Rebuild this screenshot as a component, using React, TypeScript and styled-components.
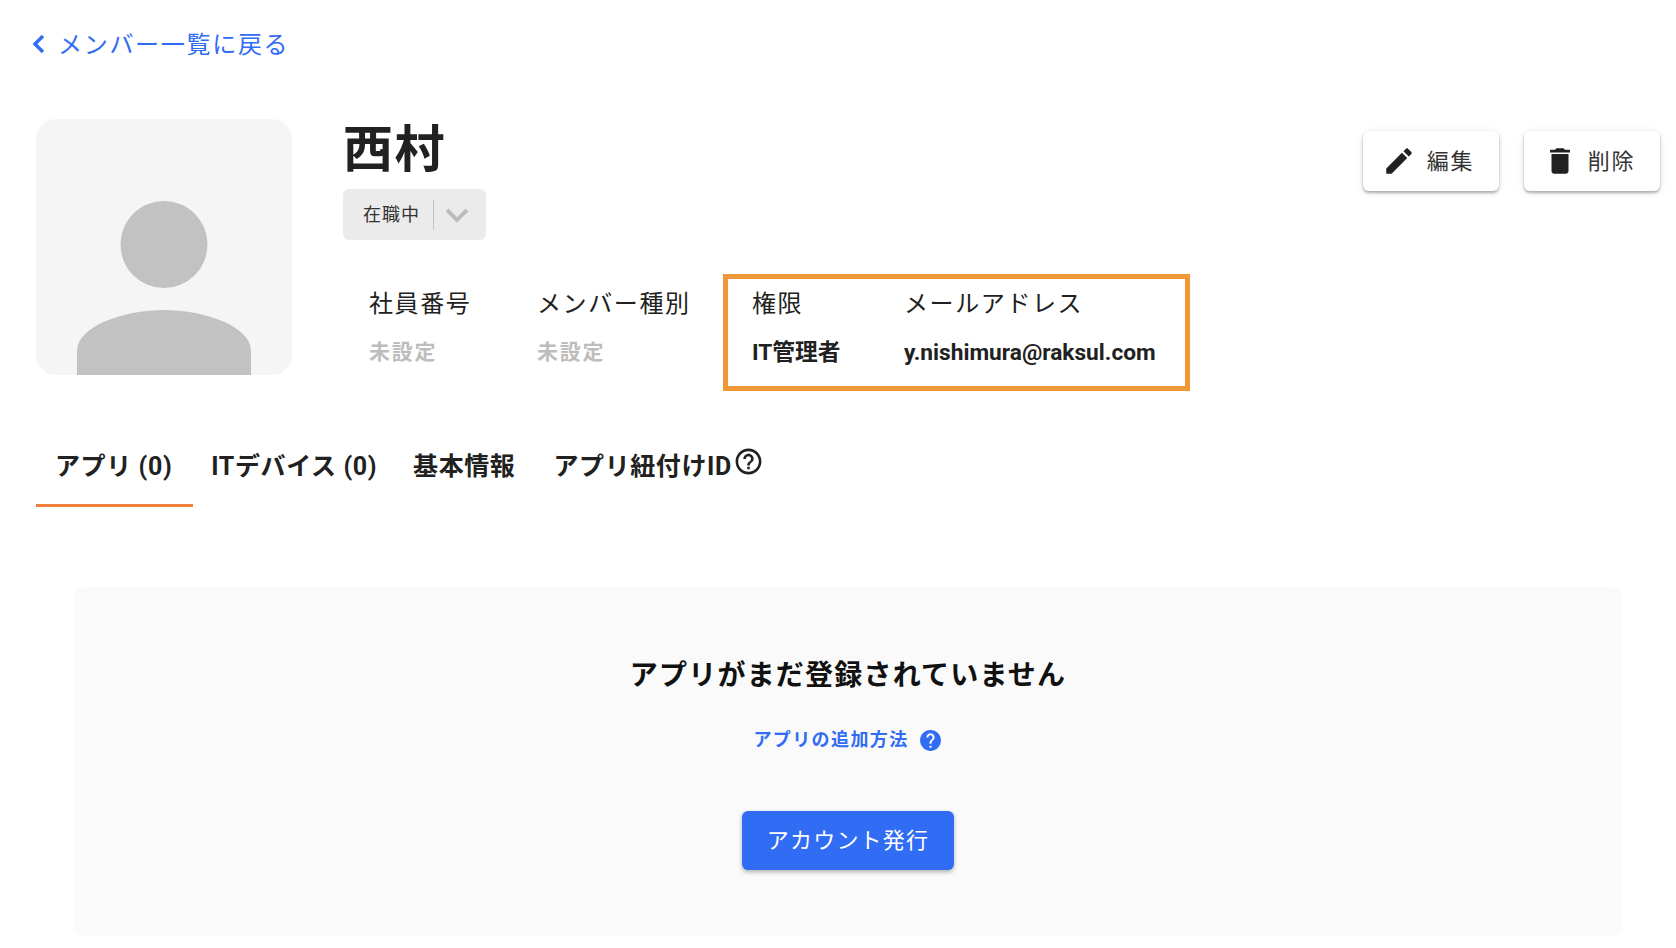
import React from "react";
import styled, { createGlobalStyle } from "styled-components";

const GlobalStyle = createGlobalStyle`
  html, body {
    margin: 0;
    padding: 0;
    background: #fff;
    font-family: Roboto, "Noto Sans CJK JP", sans-serif;
    color: #212121;
  }
`;

const Page = styled.div`
  width: 1676px;
  height: 948px;
  box-sizing: border-box;
  padding: 0 16px 12px 36px;
  display: flex;
  flex-direction: column;
  overflow: hidden;
`;

const BackLink = styled.a`
  display: flex;
  align-items: center;
  height: 88px;
  margin-left: -6px;
  margin-bottom: 31px;
  gap: 12px;
  color: #316cf4;
  font-size: 24px;
  letter-spacing: 1.7px;
  svg {
    width: 16px;
    height: 24px;
  }
`;

const BackLabel = styled.span`
  margin-bottom: 4px;
`;

const Header = styled.div`
  display: flex;
  height: 256px;
`;

const Avatar = styled.div`
  width: 256px;
  height: 256px;
  flex-shrink: 0;
  background: #f5f5f5;
  border-radius: 20px;
  overflow: hidden;
  svg {
    display: block;
  }
`;

const Profile = styled.div`
  margin-left: 51px;
  flex-grow: 1;
`;

const Name = styled.h1`
  margin: 0;
  height: 70px;
  line-height: 62px;
  font-size: 50px;
  font-weight: 700;
  letter-spacing: 1.5px;
`;

const StatusSelect = styled.div`
  width: 143px;
  height: 51px;
  box-sizing: border-box;
  display: flex;
  align-items: center;
  padding: 0 0 0 20px;
  background: #ebebeb;
  border-radius: 6px;
  font-size: 18px;
  letter-spacing: 1px;
  color: #333;
`;

const StatusLabel = styled.span`
  margin-bottom: 4px;
`;

const SelectDivider = styled.span`
  width: 1px;
  height: 30px;
  margin: 0 10px 0 13px;
  background: #c4c4c4;
`;

const MetaRow = styled.div`
  display: flex;
  margin-top: 34px;
`;

const MetaGroup = styled.div`
  display: flex;
  padding-left: 26px;
  padding-top: 14px;
  height: 117px;
  box-sizing: border-box;
`;

const MetaHighlight = styled.div`
  display: flex;
  width: 467px;
  height: 117px;
  box-sizing: border-box;
  margin-left: 36px;
  padding: 9px 0 0 24px;
  border: 5px solid #f09837;
`;

const MetaItem = styled.div<{ $width: number }>`
  width: ${(p) => p.$width}px;
  flex-shrink: 0;
`;

const MetaLabel = styled.div`
  font-size: 24px;
  line-height: 32px;
  letter-spacing: 1.6px;
  white-space: nowrap;
`;

const MetaValue = styled.div<{ $empty?: boolean }>`
  margin-top: ${(p) => (p.$empty ? "16px" : "17px")};
  font-size: ${(p) => (p.$empty ? "21px" : "22.7px")};
  line-height: 32px;
  font-weight: 700;
  letter-spacing: ${(p) => (p.$empty ? "1.7px" : "0")};
  color: ${(p) => (p.$empty ? "#bdbdbd" : "#212121")};
  white-space: nowrap;
`;

const Actions = styled.div`
  display: flex;
  gap: 25px;
  margin-top: 12px;
`;

const ActionButton = styled.button`
  width: 136px;
  height: 60px;
  display: flex;
  align-items: center;
  justify-content: center;
  gap: 11px;
  padding: 0 6px 0 0;
  border: none;
  border-radius: 6px;
  background: #fff;
  font-family: inherit;
  font-size: 22px;
  letter-spacing: 1.7px;
  color: #333;
  box-shadow: 0 2px 3px rgba(0, 0, 0, 0.3), 0 1px 8px rgba(0, 0, 0, 0.08);
  svg {
    width: 34px;
    height: 34px;
    fill: #212121;
  }
`;

const ActionLabel = styled.span`
  margin-bottom: 4px;
`;

const Tabs = styled.div`
  display: flex;
  margin-top: 44px;
  height: 88px;
`;

const Tab = styled.div<{ $active?: boolean; $trim?: number }>`
  display: flex;
  align-items: center;
  height: 88px;
  box-sizing: border-box;
  padding: 4px ${(p) => (p.$active ? 21 : 19)}px 0 19px;
  margin-right: ${(p) => -(p.$trim ?? 0)}px;
  font-size: 25px;
  font-weight: 700;
  letter-spacing: 0.6px;
  white-space: nowrap;
  border-bottom: 3px solid ${(p) => (p.$active ? "#ee7f3a" : "transparent")};
  svg {
    width: 31px;
    height: 31px;
    margin: -4px 0 0 1px;
    fill: #212121;
  }
`;

const EmptyPanel = styled.section`
  margin: 80px 38px 0;
  height: 349px;
  background: #fafafa;
  border-radius: 8px;
  display: flex;
  flex-direction: column;
  align-items: center;
`;

const EmptyTitle = styled.h2`
  margin: 70px 0 0;
  font-size: 28px;
  line-height: 38px;
  font-weight: 700;
  letter-spacing: 1.2px;
  color: #111;
`;

const HelpLink = styled.a`
  display: flex;
  align-items: center;
  gap: 9px;
  margin-top: 31px;
  font-size: 18px;
  line-height: 28px;
  font-weight: 700;
  letter-spacing: 1.4px;
  color: #316cf4;
  svg {
    width: 25px;
    height: 25px;
    fill: #316cf4;
  }
`;

const IssueButton = styled.button`
  width: 212px;
  height: 59px;
  margin-top: 57px;
  padding: 0 0 6px;
  border: none;
  border-radius: 6px;
  background: #316cf4;
  color: #fff;
  font-family: inherit;
  font-size: 22px;
  letter-spacing: 1.2px;
  box-shadow: 0 2px 4px rgba(0, 0, 0, 0.3);
`;

const Chevron = styled.svg`
  width: 26px;
  height: 16px;
`;

export default function App() {
  return (
    <Page>
      <GlobalStyle />
      <BackLink>
        <svg viewBox="0 0 16 24">
          <path d="M13 4 5 12l8 8" fill="none" stroke="#316cf4" strokeWidth="3.4" />
        </svg>
        <BackLabel>メンバー一覧に戻る</BackLabel>
      </BackLink>

      <Header>
        <Avatar>
          <svg width="256" height="256" viewBox="0 0 256 256">
            <circle cx="128" cy="125.5" r="43.5" fill="#c2c2c2" />
            <path
              d="M41 256v-24c0-24 45-41 87-41s87 17 87 41v24z"
              fill="#c2c2c2"
            />
          </svg>
        </Avatar>
        <Profile>
          <Name>西村</Name>
          <StatusSelect>
            <StatusLabel>在職中</StatusLabel>
            <SelectDivider />
            <Chevron viewBox="0 0 26 16">
              <path d="M3 3l10 10L23 3" fill="none" stroke="#bdbdbd" strokeWidth="4" />
            </Chevron>
          </StatusSelect>
          <MetaRow>
            <MetaGroup>
              <MetaItem $width={168}>
                <MetaLabel>社員番号</MetaLabel>
                <MetaValue $empty>未設定</MetaValue>
              </MetaItem>
              <MetaItem $width={150}>
                <MetaLabel>メンバー種別</MetaLabel>
                <MetaValue $empty>未設定</MetaValue>
              </MetaItem>
            </MetaGroup>
            <MetaHighlight>
              <MetaItem $width={152}>
                <MetaLabel>権限</MetaLabel>
                <MetaValue>IT管理者</MetaValue>
              </MetaItem>
              <MetaItem $width={260}>
                <MetaLabel>メールアドレス</MetaLabel>
                <MetaValue>y.nishimura@raksul.com</MetaValue>
              </MetaItem>
            </MetaHighlight>
          </MetaRow>
        </Profile>
        <Actions>
          <ActionButton>
            <svg viewBox="0 0 24 24">
              <path d="M3 17.25V21h3.75L17.81 9.94l-3.75-3.75L3 17.25zM20.71 7.04c.39-.39.39-1.02 0-1.41l-2.34-2.34c-.39-.39-1.02-.39-1.41 0l-1.83 1.83 3.75 3.75 1.83-1.83z" />
            </svg>
            <ActionLabel>編集</ActionLabel>
          </ActionButton>
          <ActionButton>
            <svg viewBox="0 0 24 24">
              <path d="M6 19c0 1.1.9 2 2 2h8c1.1 0 2-.9 2-2V7H6v12zM19 4h-3.5l-1-1h-5l-1 1H5v2h14V4z" />
            </svg>
            <ActionLabel>削除</ActionLabel>
          </ActionButton>
        </Actions>
      </Header>

      <Tabs>
        <Tab $active $trim={1}>
          アプリ (0)
        </Tab>
        <Tab $trim={2}>ITデバイス (0)</Tab>
        <Tab>基本情報</Tab>
        <Tab>
          アプリ紐付けID
          <svg viewBox="0 0 24 24">
            <path d="M11 18h2v-2h-2v2zm1-16C6.48 2 2 6.48 2 12s4.48 10 10 10 10-4.48 10-10S17.52 2 12 2zm0 18c-4.41 0-8-3.59-8-8s3.59-8 8-8 8 3.59 8 8-3.59 8-8 8zm0-14c-2.21 0-4 1.79-4 4h2c0-1.1.9-2 2-2s2 .9 2 2c0 2-3 1.75-3 5h2c0-2.25 3-2.5 3-5 0-2.21-1.79-4-4-4z" />
          </svg>
        </Tab>
      </Tabs>

      <EmptyPanel>
        <EmptyTitle>アプリがまだ登録されていません</EmptyTitle>
        <HelpLink>
          アプリの追加方法
          <svg viewBox="0 0 24 24">
            <path d="M12 2C6.48 2 2 6.48 2 12s4.48 10 10 10 10-4.48 10-10S17.52 2 12 2zm1 17h-2v-2h2v2zm2.07-7.75l-.9.92C13.45 12.9 13 13.5 13 15h-2v-.5c0-1.1.45-2.1 1.17-2.83l1.24-1.26c.37-.36.59-.86.59-1.41 0-1.1-.9-2-2-2s-2 .9-2 2H8c0-2.21 1.79-4 4-4s4 1.79 4 4c0 .88-.36 1.68-.93 2.25z" />
          </svg>
        </HelpLink>
        <IssueButton>アカウント発行</IssueButton>
      </EmptyPanel>
    </Page>
  );
}
